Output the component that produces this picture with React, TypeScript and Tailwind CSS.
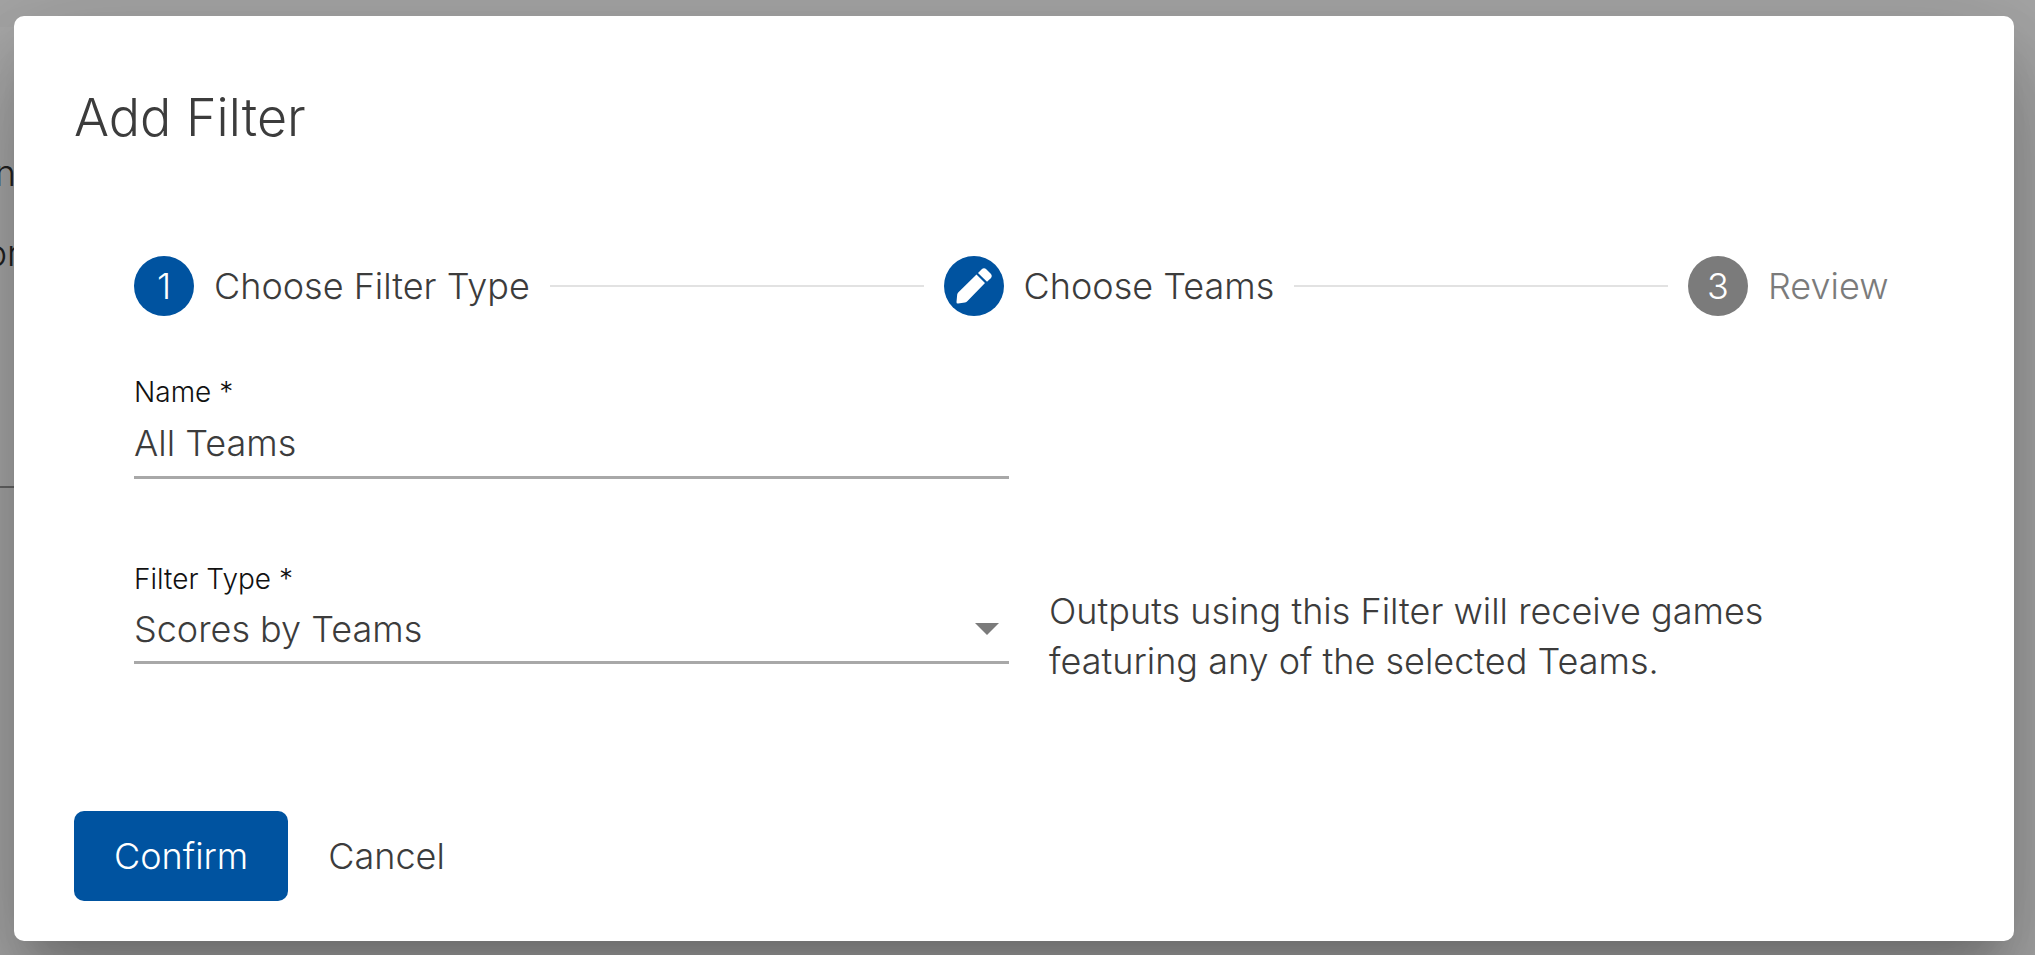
import { useState } from 'react'
import type { ReactNode } from 'react'

const PencilIcon = () => (
  <svg viewBox="0 0 36 36" className="w-9 h-9" fill="currentColor" aria-hidden="true">
    <path d="M20.500 6.500L29 15L11.500 33Q10.500 34.200 9 34.500L2 35.500Q0.300 35.600 0.500 34L1.200 26.500Q1.400 25.400 2.200 24.600Z" />
    <path d="M22 5L25.500 1.500Q28 -1 30.500 1.500L34.500 5.500Q37 8 34.500 10.500L31 13.800Z" />
  </svg>
)

interface StepProps {
  label: string
  active?: boolean
  children: ReactNode
}

const Step = ({ label, active = true, children }: StepProps) => (
  <button
    type="button"
    className={`flex items-center gap-5 text-left ${active ? 'text-[#3c3c3c]' : 'text-[#7b7b7b]'}`}
  >
    <span
      className={`flex items-center justify-center w-[60px] h-[60px] shrink-0 rounded-full text-white ${
        active ? 'bg-[#0053a0]' : 'bg-[#7b7b7b]'
      }`}
    >
      {children}
    </span>
    <span className="min-w-[126px] whitespace-nowrap">{label}</span>
  </button>
)

const StepLine = () => <div className="flex-1 h-0.5 mx-5 bg-[#e2e2e2]" />

const App = () => {
  const [name, setName] = useState('All Teams')
  const [filterType, setFilterType] = useState('Scores by Teams')

  return (
    <div className="relative min-h-screen overflow-hidden bg-[#a6a6a6] font-['Inter',sans-serif] font-light text-4xl leading-[50px] text-[#3c3c3c]">
      {/* page content behind the dialog */}
      <div className="absolute left-0 right-10 top-[27px] h-[461px] bg-[#a9a9a9] border-b-2 border-[#666666] text-[#222222]">
        <p className="w-4 mt-[121px] flex justify-end">n</p>
        <p className="w-5 mt-[30px] flex justify-end">or</p>
      </div>

      <div
        role="dialog"
        aria-labelledby="dialog-title"
        className="relative mt-4 ml-3.5 mr-[21px] mb-3.5 p-[60px] pb-10 rounded-[10px] bg-white shadow-[0_28px_38px_-18px_rgba(0,0,0,0.2),0_60px_95px_8px_rgba(0,0,0,0.14),0_22px_115px_20px_rgba(0,0,0,0.12)]"
      >
        <h1 id="dialog-title" className="text-[52px] leading-[84px]">Add Filter</h1>

        <div className="pl-[60px] pr-[30px] pt-24">
          <div className="flex items-center mr-[30px]">
            <Step label="Choose Filter Type">1</Step>
            <StepLine />
            <Step label="Choose Teams">
              <PencilIcon />
            </Step>
            <StepLine />
            <Step label="Review" active={false}>3</Step>
          </div>

          <form className="grid grid-cols-2 gap-x-10 gap-y-[84px] pt-[60px]">
            <div className="flex flex-col">
              <label htmlFor="name" className="text-[28px] leading-8 text-[#111111]">Name *</label>
              <input
                id="name"
                value={name}
                onChange={(e) => setName(e.target.value)}
                className="w-full h-[71px] pt-0.5 border-b-[3px] border-[#a8a8a8] outline-none"
              />
            </div>
            <div />
            <div className="flex flex-col">
              <label htmlFor="filter-type" className="text-[28px] leading-8 text-[#111111]">Filter Type *</label>
              <div className="relative">
                <select
                  id="filter-type"
                  value={filterType}
                  onChange={(e) => setFilterType(e.target.value)}
                  className="w-full h-[69px] pt-0.5 appearance-none border-b-[3px] border-[#a8a8a8] bg-transparent outline-none"
                >
                  <option>Scores by Teams</option>
                </select>
                <svg viewBox="0 0 24 12" className="absolute right-2.5 top-7 w-6 h-3 pointer-events-none" fill="#7b7b7b" aria-hidden="true">
                  <path d="M0 0H24L12 12Z" />
                </svg>
              </div>
            </div>
            <p className="pt-[23px] pr-10">Outputs using this Filter will receive games featuring any of the selected Teams.</p>
          </form>
        </div>

        <div className="flex gap-10 pt-[125px]">
          <button type="button" className="h-[90px] px-10 rounded-[10px] bg-[#0053a0] text-white">Confirm</button>
          <button type="button">Cancel</button>
        </div>
      </div>
    </div>
  )
}

export default App
